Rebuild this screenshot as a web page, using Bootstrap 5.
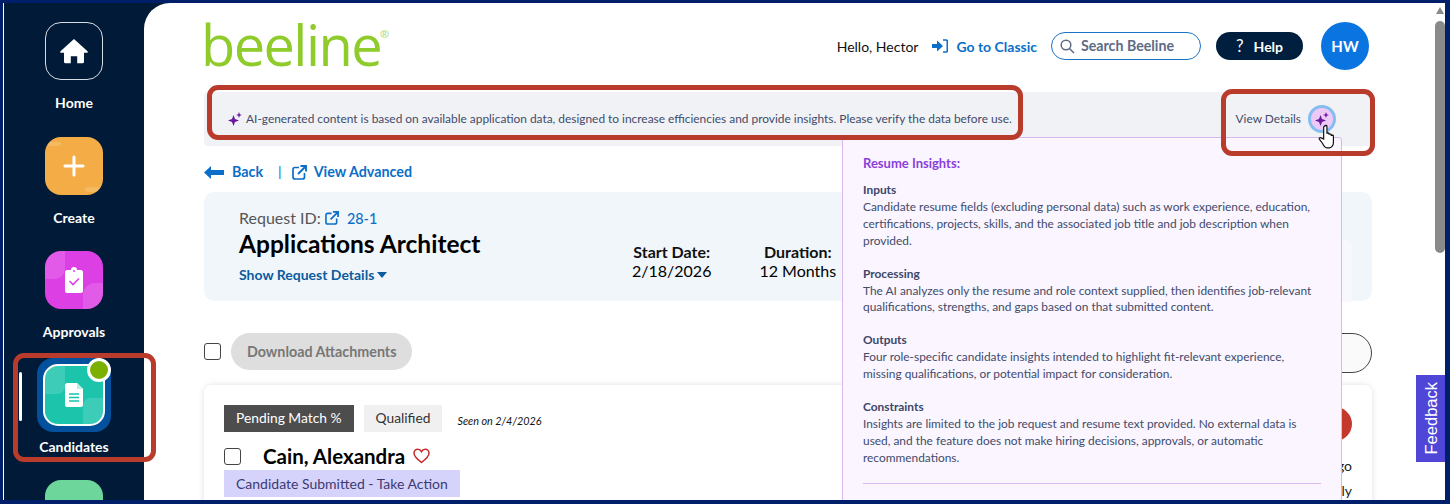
<!doctype html>
<html lang="en">
<head>
<meta charset="utf-8">
<title>Beeline</title>
<link href="https://cdn.jsdelivr.net/npm/bootstrap@5.3.0/dist/css/bootstrap.min.css" rel="stylesheet">
<style>
html,body{height:100%;overflow:hidden}
body{font-family:"Lato","Liberation Sans",sans-serif;background:#001f6b;padding:3px 5px 4px 3px;color:#000}
a{text-decoration:none}
.frame{height:497px;position:relative;overflow:hidden;background:#001a37;border-left:1px solid #fff}
.rail{width:140px;flex:none;padding-top:19px}
.rail-item{height:114.5px;text-align:center;position:relative}
.rail-item.current{margin-top:-7.5px;height:122px}
.rail-tile{width:58px;height:58px;border-radius:16px;margin:0 auto;display:flex;align-items:center;justify-content:center;position:relative;overflow:hidden}
.rail-label{font-family:"Lato",sans-serif;font-weight:700;font-size:14px;color:#fff;margin-top:14px;line-height:18px}
.t-home{border:1px solid #d8dee6}
.t-create{background:#f4ad46}
.t-appr{background:#dc3fe4}
.t-cand-wrap{width:74px;height:74px;border-radius:16px;background:#03509c;margin:0 auto;display:flex;align-items:center;justify-content:center;position:relative}
.t-cand{background:#1cc4ac;width:62px;height:62px;border:2.5px solid #fff;border-radius:15px}
.t-next{background:#6dd69a}
.dot{position:absolute;top:0;right:0;width:24px;height:24px;border-radius:50%;background:#7cb000;border:3px solid #fff}
.rail-bar{position:absolute;left:15px;top:14px;width:3px;height:49px;background:#fff;border-radius:2px}
.tile-shine{position:absolute;background:rgba(255,255,255,.15)}
.cand-label{margin-top:6px}
.pane{flex:1;background:#fff;border-top-left-radius:26px;position:relative;overflow:hidden;padding:0 0 0 60px;min-width:0}
.content{width:1168px}
.topline{height:89px}
.wordmark{font-family:"Open Sans",sans-serif;font-weight:400;font-size:56px;letter-spacing:-1.6px;color:#8fcb2a;line-height:61px;margin-top:11px;margin-left:-3px;position:relative}
.wordmark sup{font-size:11px;color:#b7dd80;top:-28px;left:-1px;font-weight:700;letter-spacing:0;position:relative;vertical-align:baseline}
.hello{font-size:14px;color:#111;margin-right:14px}
.classic{color:#0b6fc9;font-weight:700;font-size:14px;margin-right:14px}
.searchbox{width:150px;height:28px;border:1px solid #1a73c5;border-radius:14px;color:#5d6b85;font-size:14.2px;font-weight:700;display:flex;align-items:center;padding-left:8px;gap:6px;margin-right:15px}
.helpbtn{width:87px;height:28px;background:#001f3f;color:#fff;border-radius:14px;font-weight:700;font-size:14px;display:flex;align-items:center;justify-content:center;gap:10px;margin-right:18px}
.helpbtn i{font-style:normal;font-weight:400;font-size:17px}
.avatar{width:48px;height:48px;border-radius:50%;background:#0a74e0;color:#fff;font-weight:700;font-size:15px;display:flex;align-items:center;justify-content:center;margin-right:3px}
.aibar{height:54px;background:#f1f2f5;border-radius:4px;padding:0 36px 0 24px;font-size:11.9px;color:#414b6b}
.viewdet{font-size:11.9px}
.spark-btn{width:28px;height:28px;border-radius:50%;background:#edc9f7;border:3px solid #86bdf0;display:flex;align-items:center;justify-content:center;margin-left:7px}
.crumbs{margin-top:16px;height:20px;color:#0b6fc9;font-weight:700;font-size:14.3px}
.crumbs a{color:#0b6fc9}
.req{margin-top:10px;height:109px;background:#f1f6fb;border-radius:10px;padding:15px 35px;position:relative}
.req-inner{position:absolute;right:20px;top:48px;width:180px;height:62px;background:#f6f8fb;border-radius:6px 6px 0 0}
.req-id{font-size:16px;color:#555;line-height:22px}
.req-id b{color:#0b6fc9;font-weight:500;font-size:14.4px;margin-left:4px}
.req-title{font-size:24.5px;font-weight:700;line-height:27px;color:#000}
.req-more{font-size:14px;font-weight:700;color:#0b5c9e;margin-top:9px;line-height:18px}
.caret{display:inline-block;border:5px solid transparent;border-top:6px solid #0b5c9e;border-bottom:0;margin-left:3px;vertical-align:2px}
.facts{position:absolute;left:428px;top:50px;display:flex;gap:48px;text-align:center;font-size:16px;line-height:19px}
.facts b{display:block;font-weight:700;color:#111}
.tools{margin-top:32px;height:40px;gap:10px}
.sq{width:17px;height:17px;border:1px solid #444;border-radius:3px;background:#fff;flex:none}
.dlbtn{background:#dedede;color:#777;font-size:14.3px;font-weight:700;height:37px;padding:0 16px;border-radius:19px;display:flex;align-items:center;margin-top:-3px}
.tools .sq{margin-top:-3px}
.outline-pill{margin-left:auto;width:200px;height:40px;border:1px solid #444;border-radius:20px;background:#fafafa}
.cand-card{margin-top:12px;height:140px;border-radius:8px;box-shadow:0 0 6px rgba(0,0,0,.12);padding:20px;position:relative;background:#fff}
.tag{height:27px;display:inline-flex;align-items:center;padding:0 12px;font-size:13.8px}
.tag-d{background:#4d4d4d;color:#fff}
.tag-l{background:#f0f0f0;color:#333;margin-left:10px}
.seen{font-size:10.8px;font-style:italic;color:#111;margin-left:15px;padding-top:5px}
.cname{font-size:20.5px;font-weight:700;color:#000;margin-left:22px;line-height:26px}
.statustag{display:inline-block;background:#d5d3fb;color:#3b3a72;font-size:14px;height:27px;line-height:27px;padding:0 12px;margin-top:1px}
.red-c{position:absolute;right:20px;top:22px;width:34px;height:34px;background:#c5382c;border-radius:50%}
.fr1{position:absolute;right:20px;top:70px;font-size:14px;color:#222}
.fr2{position:absolute;right:20px;top:95px;font-size:14px;color:#222}
.pop{position:absolute;left:838px;top:134px;width:500px;height:380px;background:#faf5ff;border:1px solid #d8b9ee;border-radius:3px;padding:16px 20px;z-index:5;color:#414b6b;font-size:11.9px;line-height:16.9px}
.pop h6{font-size:13px;font-weight:700;color:#8a3fdc;margin:0 0 10px;line-height:18px}
.pop p{margin:0 0 16px}
.pop strong{display:block;font-weight:700;color:#3c4768;font-size:11.9px}
.pop hr{margin:5px 0 0;border-color:#d8b9ee;opacity:1}
.annot{position:absolute;border:5px solid #b93b2c;border-radius:11px;z-index:8;pointer-events:none}
.a1{left:203px;top:82px;width:816px;height:55px}
.a2{left:1217px;top:86px;width:154px;height:67px}
.a3{left:9px;top:350px;width:143px;height:109px}
.hand{position:absolute;left:1314px;top:121px;z-index:9}
.feedback{position:absolute;left:1412px;top:372px;width:30px;height:87px;background:#4f46d8;color:#fff;font-family:"Liberation Sans",sans-serif;font-size:16.5px;z-index:7;display:flex;align-items:center;justify-content:center}
.feedback span{writing-mode:vertical-rl;transform:rotate(180deg)}
.sbar{position:absolute;right:0;top:0;width:12px;height:100%;background:#fff;z-index:6}
.sbar .thumb{position:absolute;right:0;top:18px;width:10px;height:232px;background:#8a8a8a;border-radius:5px}
.sbar .up{position:absolute;right:1px;top:4px;border:4px solid transparent;border-bottom:7px solid #8a8a8a;border-top:0}
</style>
</head>
<body>
<div class="frame d-flex">
  <nav class="rail">
    <div class="rail-item"><div class="rail-tile t-home">
      <svg width="30" height="26" viewBox="0 0 30 26"><path d="M15 1 1.500 13.200c-.6.700-.2 1.600.700 1.600H5V24c0 .700.500 1.200 1.200 1.200h5.600v-7h6.400v7h5.600c.700 0 1.200-.5 1.200-1.200v-9.200h2.800c.900 0 1.300-.9.700-1.600Z" fill="#fff"/></svg>
    </div><div class="rail-label">Home</div></div>
    <div class="rail-item"><div class="rail-tile t-create">
      <span class="tile-shine" style="left:2px;top:5px;width:14px;height:4px;border-radius:2px"></span>
      <span class="tile-shine" style="right:2px;bottom:3px;width:16px;height:5px;border-radius:3px"></span>
      <svg width="22" height="22" viewBox="0 0 22 22"><path d="M11 2v18M2 11h18" stroke="#fff" stroke-width="3" stroke-linecap="round"/></svg>
    </div><div class="rail-label">Create</div></div>
    <div class="rail-item"><div class="rail-tile t-appr">
      <span class="tile-shine" style="left:0;top:0;width:20px;height:28px;border-bottom-right-radius:10px"></span>
      <span class="tile-shine" style="right:0;bottom:0;width:20px;height:26px;border-top-left-radius:12px"></span>
      <svg width="20" height="26" viewBox="0 0 20 26" style="position:relative"><path d="M7 3a3 3 0 0 1 6 0h4c1 0 2 1 2 2v19c0 1-1 2-2 2H3c-1 0-2-1-2-2V5c0-1 1-2 2-2Z" fill="#fff"/><path d="m5.500 14 3.500 3.500 6-6" fill="none" stroke="#dc3fe4" stroke-width="1.600"/><circle cx="10" cy="4" r="1" fill="#dc3fe4"/></svg>
    </div><div class="rail-label">Approvals</div></div>
    <div class="rail-item current"><span class="rail-bar"></span><div class="t-cand-wrap"><div class="rail-tile t-cand">
      <span class="tile-shine" style="left:0;top:0;width:20px;height:28px;border-bottom-right-radius:8px"></span>
      <span class="tile-shine" style="right:0;bottom:0;width:20px;height:26px;border-top-left-radius:8px"></span>
      <svg width="20" height="24" viewBox="0 0 20 24" style="position:relative"><path d="M3 0h10l6 6v16c0 1-1 2-2 2H3c-1 0-2-1-2-2V2c0-1 1-2 2-2Z" fill="#fff"/><path d="M13 0v6h6" fill="#bdeee6"/><path d="M5 11h10M5 14.500h10M5 18h10" stroke="#15c4ad" stroke-width="1.500"/></svg>
    </div><span class="dot"></span></div><div class="rail-label cand-label">Candidates</div></div>
    <div class="rail-item"><div class="rail-tile t-next"></div></div>
  </nav>
  <main class="pane">
    <div class="content">
      <div class="topline d-flex align-items-start justify-content-between">
        <div class="wordmark">beeline<sup>®</sup></div>
        <div class="d-flex align-items-center" style="height:48px;margin-top:19px">
          <span class="hello">Hello, Hector</span>
          <a class="classic d-flex align-items-center gap-2" href="#">
            <svg width="16" height="14" viewBox="0 0 16 14"><path d="M0 5h5V1.500L11 7l-6 5.500V9H0Z" fill="#0b6fc9"/><path d="M11 1h3c.800 0 1.300.500 1.300 1.300v9.400c0 .800-.5 1.300-1.300 1.300h-3" fill="none" stroke="#0b6fc9" stroke-width="1.600"/></svg>
            Go to Classic</a>
          <div class="searchbox">
            <svg width="15" height="15" viewBox="0 0 15 15"><circle cx="6" cy="6" r="4.800" fill="none" stroke="#5d6b85" stroke-width="1.500"/><path d="m9.500 9.500 4.500 4.500" stroke="#5d6b85" stroke-width="1.500"/></svg>
            Search Beeline</div>
          <div class="helpbtn"><i>?</i>Help</div>
          <div class="avatar">HW</div>
        </div>
      </div>
      <div class="aibar d-flex align-items-center justify-content-between">
        <span class="d-flex align-items-center gap-1">
          <svg width="14" height="14" viewBox="0 0 14 14"><path d="M5.500 3 7 7l4 1.500-4 1.500-1.500 4L4 10 0 8.500 4 7Z" fill="#6b1a9b"/><path d="M11 0l.800 2.200L14 3l-2.200.800L11 6l-.8-2.200L8 3l2.200-.8Z" fill="#6b1a9b"/></svg>
          <span>AI-generated content is based on available application data, designed to increase efficiencies and provide insights. Please verify the data before use.</span>
        </span>
        <span class="d-flex align-items-center viewdet">View Details
          <span class="spark-btn"><svg width="14" height="14" viewBox="0 0 14 14"><path d="M5.500 3 7 7l4 1.500-4 1.500-1.500 4L4 10 0 8.500 4 7Z" fill="#6b1a9b"/><path d="M11 0l.800 2.200L14 3l-2.200.800L11 6l-.8-2.200L8 3l2.200-.8Z" fill="#6b1a9b"/></svg></span></span>
      </div>
      <div class="crumbs d-flex align-items-center">
        <svg width="20" height="13" viewBox="0 0 20 13"><path d="M0 6.500 7 0v4h13v5H7v4Z" fill="#0b6fc9"/></svg>
        <a href="#" class="ms-2">Back</a>
        <span class="fw-normal" style="margin-left:15px">|</span>
        <svg style="margin:0 7px 0 10px" width="15" height="15" viewBox="0 0 15 15"><path d="M7 2.500H3c-1 0-2 1-2 2V12c0 1 1 2 2 2h7.500c1 0 2-1 2-2V8" fill="none" stroke="#0b6fc9" stroke-width="1.700"/><path d="M6 9 13 2M8.500 1H14v5.500" fill="none" stroke="#0b6fc9" stroke-width="1.900"/></svg>
        <a href="#">View Advanced</a>
      </div>
      <section class="req">
        <div class="req-inner"></div>
        <div class="req-id">Request ID:
          <svg width="14" height="14" viewBox="0 0 15 15" style="vertical-align:-1px"><path d="M7 2.500H3c-1 0-2 1-2 2V12c0 1 1 2 2 2h7.500c1 0 2-1 2-2V8" fill="none" stroke="#0b6fc9" stroke-width="1.700"/><path d="M6 9 13 2M8.500 1H14v5.500" fill="none" stroke="#0b6fc9" stroke-width="1.900"/></svg>
          <b>28-1</b></div>
        <div class="req-title">Applications Architect</div>
        <div class="req-more">Show Request Details<span class="caret"></span></div>
        <div class="facts">
          <div><b>Start Date:</b>2/18/2026</div>
          <div><b>Duration:</b>12 Months</div>
        </div>
      </section>
      <div class="tools d-flex align-items-center">
        <span class="sq"></span>
        <span class="dlbtn">Download Attachments</span>
        <span class="outline-pill"></span>
      </div>
      <section class="cand-card">
        <div class="d-flex align-items-center">
          <span class="tag tag-d">Pending Match %</span>
          <span class="tag tag-l">Qualified</span>
          <span class="seen">Seen on 2/4/2026</span>
        </div>
        <div class="d-flex align-items-center" style="margin-top:11px">
          <span class="sq"></span>
          <span class="cname">Cain, Alexandra</span>
          <svg class="ms-2" width="17" height="16" viewBox="0 0 17 16"><path d="M8.500 14.500C4 11 1 8.500 1 5.200 1 2.800 2.800 1.200 4.800 1.200c1.600 0 2.900.900 3.700 2.400.800-1.500 2.100-2.400 3.700-2.400 2 0 3.800 1.600 3.800 4 0 3.300-3 5.800-7.500 9.300Z" fill="none" stroke="#c62a2a" stroke-width="1.500"/></svg>
        </div>
        <span class="statustag">Candidate Submitted - Take Action</span>
        <span class="red-c"></span>
        <span class="fr1">Ago</span>
        <span class="fr2">Only</span>
      </section>
    </div>
  </main>
  <aside class="pop">
    <h6>Resume Insights:</h6>
    <p><strong>Inputs</strong>Candidate resume fields (excluding personal data) such as work experience, education, certifications, projects, skills, and the associated job title and job description when provided.</p>
    <p><strong>Processing</strong>The AI analyzes only the resume and role context supplied, then identifies job-relevant qualifications, strengths, and gaps based on that submitted content.</p>
    <p><strong>Outputs</strong>Four role-specific candidate insights intended to highlight fit-relevant experience, missing qualifications, or potential impact for consideration.</p>
    <p><strong>Constraints</strong>Insights are limited to the job request and resume text provided. No external data is used, and the feature does not make hiring decisions, approvals, or automatic recommendations.</p>
    <hr>
  </aside>
  <svg class="hand" width="20" height="26" viewBox="0 0 18 24"><path d="M6 2c0-1 2-1 2 0v7c0-1 2-1 2 0v1c0-1 2-1 2 0v1c0-1 2-1 2 0v6c0 3-2 5-4 5H8c-2 0-3-2-4-4l-3-4c-.6-1 .800-2 1.800-1L5 14V3c0-.5.500-1 1-1Z" fill="#fff" stroke="#111" stroke-width="1.100"/></svg>
  <span class="annot a1"></span>
  <span class="annot a2"></span>
  <span class="annot a3"></span>
  <div class="feedback"><span>Feedback</span></div>
  <div class="sbar"><span class="up"></span><span class="thumb"></span></div>
</div>
<script src="https://cdn.jsdelivr.net/npm/bootstrap@5.3.0/dist/js/bootstrap.bundle.min.js"></script>
</body>
</html>
